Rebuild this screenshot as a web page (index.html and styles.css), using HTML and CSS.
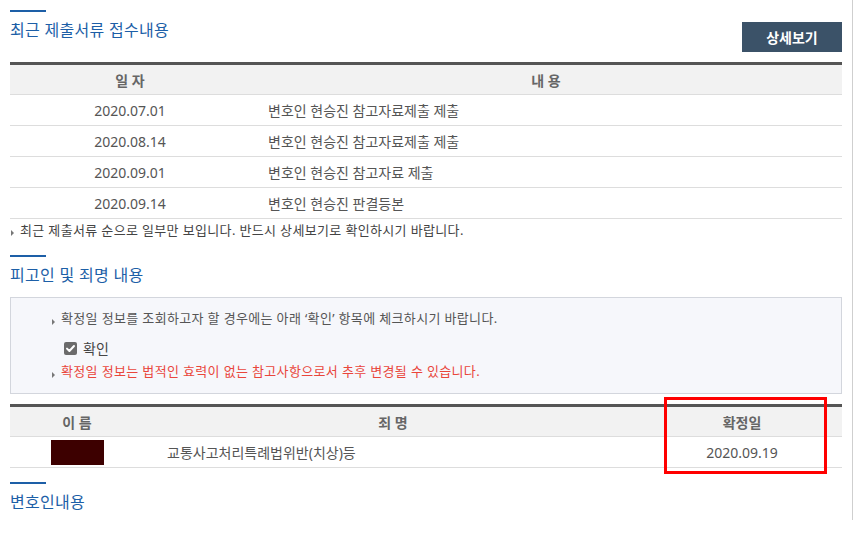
FILE: index.html
```html
<!DOCTYPE html>
<html lang="ko">
<head>
<meta charset="utf-8">
<title>사건 정보</title>
<link rel="stylesheet" href="styles.css">
</head>
<body>
<div class="frame">
  <div class="page">
    <section class="sec">
      <div class="sec-head">
        <div class="title-wrap">
          <div class="title-bar"></div>
          <h2 class="title">최근 제출서류 접수내용</h2>
        </div>
        <button class="btn-detail" type="button">상세보기</button>
      </div>
      <table class="tbl tbl-docs">
        <colgroup><col class="c-date"><col></colgroup>
        <thead>
          <tr><th>일 자</th><th>내 용</th></tr>
        </thead>
        <tbody>
          <tr><td class="center">2020.07.01</td><td class="left">변호인 현승진 참고자료제출 제출</td></tr>
          <tr><td class="center">2020.08.14</td><td class="left">변호인 현승진 참고자료제출 제출</td></tr>
          <tr><td class="center">2020.09.01</td><td class="left">변호인 현승진 참고자료 제출</td></tr>
          <tr><td class="center">2020.09.14</td><td class="left">변호인 현승진 판결등본</td></tr>
        </tbody>
      </table>
      <p class="note bullet">최근 제출서류 순으로 일부만 보입니다. 반드시 상세보기로 확인하시기 바랍니다.</p>
    </section>

    <section class="sec sec2">
      <div class="title-wrap">
        <div class="title-bar"></div>
        <h2 class="title">피고인 및 죄명 내용</h2>
      </div>
      <div class="info-box">
        <p class="bullet info-line">확정일 정보를 조회하고자 할 경우에는 아래 ‘확인’ 항목에 체크하시기 바랍니다.</p>
        <label class="check-row">
          <svg class="check" width="13" height="13" viewBox="0 0 13 13" aria-hidden="true">
            <rect x="0" y="0" width="13" height="13" rx="2" fill="#6b6b6b"/>
            <path d="M3 6.6 L5.4 9 L10 4" fill="none" stroke="#fff" stroke-width="2" stroke-linecap="round" stroke-linejoin="round"/>
          </svg>
          <span>확인</span>
        </label>
        <p class="bullet info-line warn">확정일 정보는 법적인 효력이 없는 참고사항으로서 추후 변경될 수 있습니다.</p>
      </div>
      <div class="tbl-wrap">
        <table class="tbl tbl-crime">
          <colgroup><col class="c-name"><col><col class="c-conf"></colgroup>
          <thead>
            <tr><th>이 름</th><th>죄 명</th><th>확정일</th></tr>
          </thead>
          <tbody>
            <tr>
              <td class="center"><span class="redact"></span></td>
              <td class="left crime">교통사고처리특례법위반(치상)등</td>
              <td class="center">2020.09.19</td>
            </tr>
          </tbody>
        </table>
        <div class="highlight"></div>
      </div>
    </section>

    <section class="sec sec3">
      <div class="title-wrap">
        <div class="title-bar"></div>
        <h2 class="title">변호인내용</h2>
      </div>
    </section>
  </div>
</div>
</body>
</html>
```

FILE: styles.css
```css
* { box-sizing: border-box; }

html, body {
  margin: 0;
  padding: 0;
  background: #fff;
}

body {
  font-family: "Noto Sans", "Noto Sans CJK KR", sans-serif;
  color: #555;
  font-size: 13px;
}

.frame {
  width: 853px;
  height: 520px;
  border-right: 1px solid #cfcfcf;
}

.page {
  width: 842px;
  padding-left: 10px;
}

.sec-head {
  display: flex;
  justify-content: space-between;
  align-items: flex-end;
  height: 52px;
}

.title-wrap {
  display: flex;
  flex-direction: column;
  padding-top: 10px;
}

.sec-head .title-wrap {
  align-self: flex-start;
}

.title-bar {
  width: 36px;
  height: 2px;
  background: #1d5fa7;
}

.title {
  margin: 5px 0 0;
  font-size: 16px;
  line-height: 26px;
  font-weight: normal;
  color: #1d5fa7;
  letter-spacing: 0.3px;
}

.btn-detail {
  width: 100px;
  height: 30px;
  border: 0;
  background: #3b5268;
  color: #fff;
  font-family: inherit;
  font-size: 14px;
  font-weight: bold;
  letter-spacing: 0;
  padding: 0;
}

.tbl {
  width: 832px;
  border-collapse: collapse;
  border-top: 3px solid #555;
  margin-top: 10px;
  table-layout: fixed;
}

.tbl th {
  height: 31px;
  background: #f2f2f2;
  border-bottom: 1px solid #ddd;
  font-size: 14px;
  font-weight: bold;
  color: #666;
  padding: 0;
}

.tbl td {
  height: 31px;
  border-bottom: 1px solid #ddd;
  font-size: 14px;
  color: #555;
  padding: 0;
}

.tbl .center { text-align: center; }
.tbl .left { text-align: left; padding-left: 18px; }

.c-date { width: 240px; }
.c-name { width: 134px; }
.c-conf { width: 200px; }

.tbl td.crime { padding-left: 23px; }

.bullet {
  position: relative;
  padding-left: 10px;
}

.bullet::before {
  content: "";
  position: absolute;
  left: 1px;
  top: 10px;
  border-left: 3px solid #777;
  border-top: 3px solid transparent;
  border-bottom: 3px solid transparent;
}

.note {
  margin: 1px 0 0;
  line-height: 20px;
  font-size: 13px;
  color: #444;
  letter-spacing: 0.35px;
}

.sec2 { margin-top: 5px; }

.info-box {
  margin-top: 9px;
  width: 832px;
  height: 97px;
  border: 1px solid #d3d6dd;
  background: #f6f7fb;
  padding: 10px 0 0 40px;
  display: flex;
  flex-direction: column;
}

.info-line {
  margin: 0;
  line-height: 20px;
  color: #555;
  letter-spacing: 0.35px;
}

.info-line.bullet::before { top: 11px; }

.check-row {
  display: flex;
  align-items: center;
  gap: 6px;
  margin: 10px 0 0 13px;
  height: 20px;
  color: #444;
  font-size: 14px;
}

.warn {
  margin-top: 3px;
  color: #e9463b;
}

.tbl-wrap {
  position: relative;
  margin-top: 10px;
}

.tbl-wrap .tbl { margin-top: 0; }

.redact {
  display: inline-block;
  width: 53px;
  height: 25px;
  background: #3d0000;
  vertical-align: middle;
}

.highlight {
  position: absolute;
  left: 654px;
  top: -7px;
  width: 163px;
  height: 77px;
  border: 3px solid #ff0000;
}

.sec3 { margin-top: 4px; }
```
